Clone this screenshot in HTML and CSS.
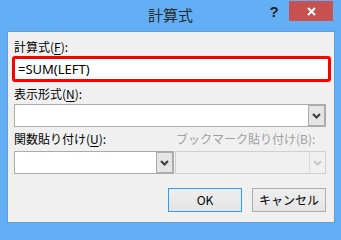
FILE: index.html
```html
<!DOCTYPE html>
<html lang="ja">
<head>
<meta charset="utf-8">
<title>計算式</title>
<link rel="stylesheet" href="styles.css">
</head>
<body>
<div class="window">
  <div class="titlebar">
    <div></div>
    <div class="title">計算式</div>
    <div class="controls">
      <span class="help">?</span>
      <span class="close">
        <svg width="9" height="9" viewBox="0 0 9 9"><path d="M1 1 L8 8 M8 1 L1 8" stroke="#fff" stroke-width="2" fill="none"/></svg>
      </span>
    </div>
  </div>
  <div class="client">
    <div class="label l1">計算式(<u>F</u>):</div>
    <div class="formula">=SUM(LEFT)</div>
    <div class="label l2">表示形式(<u>N</u>):</div>
    <div class="combo wide">
      <div class="field"></div>
      <div class="drop"><svg width="9" height="6" viewBox="0 0 9 6"><path d="M1 1 L4.5 4.5 L8 1" stroke="#3c3c3c" stroke-width="2" fill="none"/></svg></div>
    </div>
    <div class="pair">
      <div class="col">
        <div class="label l3">関数貼り付け(<u>U</u>):</div>
        <div class="combo">
          <div class="field"></div>
          <div class="drop"><svg width="9" height="6" viewBox="0 0 9 6"><path d="M1 1 L4.5 4.5 L8 1" stroke="#3c3c3c" stroke-width="2" fill="none"/></svg></div>
        </div>
      </div>
      <div class="col">
        <div class="label l3 disabled">ブックマーク貼り付け(B):</div>
        <div class="combo off">
          <div class="field"></div>
          <div class="drop"><svg width="9" height="6" viewBox="0 0 9 6"><path d="M1 1 L4.5 4.5 L8 1" stroke="#c8c8c8" stroke-width="2" fill="none"/></svg></div>
        </div>
      </div>
    </div>
    <div class="buttons">
      <div class="btn default">OK</div>
      <div class="btn">キャンセル</div>
    </div>
  </div>
</div>
</body>
</html>
```

FILE: styles.css
```css
html, body {
  margin: 0;
  padding: 0;
}
body {
  width: 341px;
  height: 230px;
  background: #63aff5;
  font-family: "Noto Sans CJK JP", "Noto Sans", sans-serif;
  font-size: 12px;
  color: #000;
  overflow: hidden;
}
.window {
  width: 341px;
  height: 230px;
  display: flex;
  flex-direction: column;
}
.titlebar {
  height: 31px;
  display: grid;
  grid-template-columns: 1fr auto 1fr;
  align-items: start;
}
.title {
  font-size: 15px;
  line-height: 20px;
  padding-top: 5px;
  color: #2a2a2a;
}
.controls {
  display: flex;
  justify-content: flex-end;
  padding-right: 8px;
  padding-top: 1px;
}
.help {
  width: 26px;
  height: 20px;
  display: flex;
  align-items: center;
  justify-content: center;
  font-family: "Liberation Sans", sans-serif;
  font-weight: bold;
  font-size: 15px;
  color: #222;
  padding-right: 2px;
}
.close {
  width: 44px;
  height: 20px;
  background: #c75050;
  display: flex;
  align-items: center;
  justify-content: center;
}
.client {
  margin: 0 6px 0 7px;
  height: 190px;
  background: #f0f0f0;
  border: 1px solid #5b9fdc;
  display: flex;
  flex-direction: column;
}
.label {
  line-height: 16px;
  height: 16px;
  padding-left: 6px;
  white-space: nowrap;
}
.label u {
  text-decoration-thickness: 1px;
  text-underline-offset: 2px;
}
.l1 { margin-top: 7px; }
.formula {
  margin: 1px 0 0 4px;
  width: 310px;
  height: 20px;
  border: 3px solid #ff0000;
  border-radius: 3px;
  background: #fff;
  font-family: "Noto Sans", "Noto Sans CJK JP", sans-serif;
  font-size: 13px;
  line-height: 20px;
  padding-left: 3px;
}
.l2 { margin-top: 4px; }
.combo {
  margin: 2px 0 0 6px;
  height: 21px;
  border: 1px solid #ababab;
  background: #fff;
  display: flex;
}
.combo.wide { width: 310px; }
.field { flex: 1; }
.drop {
  width: 15px;
  border: 1px solid #ababab;
  background: #e5e5e5;
  display: flex;
  align-items: center;
  justify-content: center;
}
.combo.off {
  background: #f0f0f0;
  border-color: #d0d0d0;
}
.combo.off .drop {
  background: #f0f0f0;
  border-color: #d9d9d9;
  border-top: none;
  border-bottom: none;
  border-right: none;
}
.pair {
  margin-top: 4px;
  display: grid;
  grid-template-columns: 166px 152px;
}
.pair .combo { margin-top: 4px; }
.pair .col:last-child .label { padding-left: 0; margin-left: 2px; }
.pair .col:last-child .combo { margin-left: 1px; }
.disabled { color: #a0a0a0; }
.l3 { margin-top: 0; }
.buttons {
  margin-top: 14px;
  display: flex;
  justify-content: flex-end;
  gap: 10px;
  padding-right: 8px;
}
.btn {
  width: 72px;
  height: 22px;
  border: 1px solid #adadad;
  background: linear-gradient(#eeeeee, #e5e5e5);
  display: flex;
  align-items: center;
  justify-content: center;
  line-height: 16px;
}
.btn.default {
  border-color: #3399ff;
}
```
